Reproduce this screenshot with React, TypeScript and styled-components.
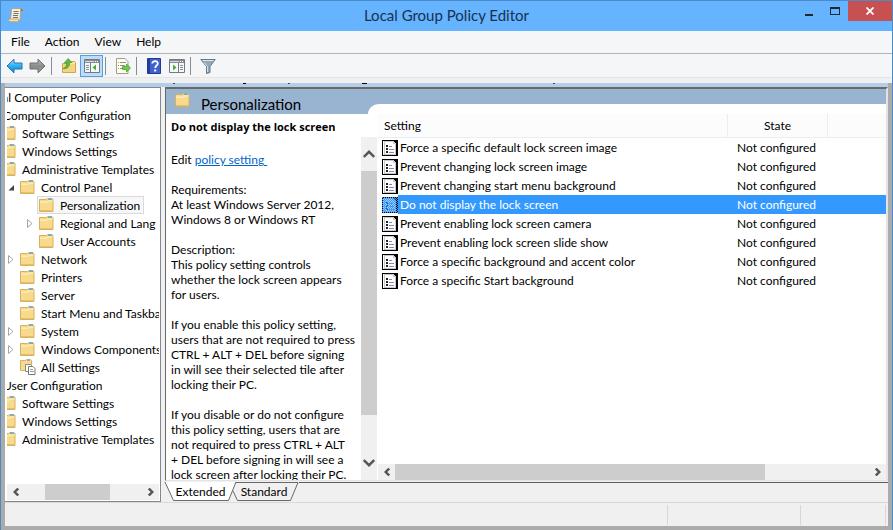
import React from 'react';
import styled, { createGlobalStyle, css } from 'styled-components';

const GlobalStyle = createGlobalStyle`
  *, *::before, *::after { box-sizing: border-box; }
  body { margin: 0; }
  body, button { font-family: Lato, "Open Sans", sans-serif; font-size: 12px; line-height: 15px; color: #000; }
  button { border: 0; padding: 0; background: none; text-align: left; }
  ul { list-style: none; margin: 0; padding: 0; }
`;

const Window = styled.div`
  display: flex; flex-direction: column; min-height: 100vh;
  border: 1px solid #4a8ac6; background: #f0f0f0; overflow: hidden;
`;

const TitleBar = styled.header`
  display: grid; grid-template-columns: 96px 1fr 96px; height: 30px; background: #66b3ff;
`;
const TitleIcon = styled.div`padding: 6px 0 0 7px;`;
const Title = styled.h1`
  margin: 0; font-size: 15px; font-weight: 400; line-height: 29px; text-align: center; color: #16324d;
`;
const WindowButtons = styled.div`display: flex; justify-content: flex-end; align-items: flex-start;`;
const WindowButton = styled.button<{ $close?: boolean }>`
  display: grid; place-items: center; height: 20px; flex: none;
  width: ${p => (p.$close ? 44 : 26)}px;
  background: ${p => (p.$close ? '#c75050' : 'transparent')};
`;

const MenuBar = styled.nav`
  display: flex; gap: 15px; height: 23px; padding-left: 10px;
  background: #f5f6f7; border-bottom: 1px solid #b2b4b5;
`;
const MenuItem = styled.button`line-height: 22px;`;

const ToolBar = styled.div`
  display: flex; height: 24px; padding: 1px 0 0 2px; background: #f5f6f7; border-bottom: 1px solid #e5e5e5;
`;
const ToolButton = styled.button<{ $active?: boolean }>`
  display: grid; place-items: center; width: 23px; height: 22px; border: 1px solid transparent;
  ${p => p.$active && css`background: #bcdcfa; border-color: #569de5;`}
`;
const Separator = styled.div`width: 1px; height: 18px; margin: 2px 5px 0 2px; background: #8a8c8e;`;
const ToolGap = styled.div`height: 5px; background: #f0f0f0;`;

const Frame = styled.div`
  flex: 1; display: flex; flex-direction: column; padding: 0 4px 4px; background: #ababab;
`;
const Strip = styled.div`
  height: 4px; background: #b4cee9;
  svg { display: block; }
`;
const Panes = styled.main`flex: 1; display: flex; min-height: 0; background: #f0f0f0;`;

const TreePane = styled.section`
  flex: none; width: 156px; display: flex; flex-direction: column; padding: 0 1px 1px 2px;
  border: solid #828790; border-width: 1px 1px 1px 0; background: #fff;
`;
const TreeClip = styled.div`flex: 1; overflow: hidden;`;
const Tree = styled.ul`margin-left: -58px; width: 320px;`;
const TreeRow = styled.li<{ $level: number }>`
  display: flex; align-items: center; height: 18px; padding-left: ${p => p.$level * 19}px;
`;
const Twisty = styled.span`flex: none; width: 12px; height: 18px; display: grid; align-items: center; padding-left: 2px;`;
const TreeLabel = styled.button<{ $selected?: boolean }>`
  display: flex; align-items: center; gap: 5px; height: 18px; padding: 0 3px 0 1px; white-space: nowrap;
  border: 1px solid transparent;
  ${p => p.$selected && css`background: #f7f7f7; border-color: #dadada;`}
`;

const Splitter = styled.div`flex: none; width: 4px; background: #f0f0f0;`;

const DetailPane = styled.section`flex: 1; min-width: 0; display: flex; flex-direction: column;`;
const DetailBox = styled.div`
  flex: 1; min-height: 0; display: flex; flex-direction: column; background: #fff;
  border: solid; border-width: 2px 2px 1px 1px; border-color: #696969 #e3e3e3 #e3e3e3 #696969;
`;
const Banner = styled.div`display: flex; align-items: flex-end; height: 25px; background: #99b4d1;`;
const BannerTitle = styled.h2`
  display: flex; align-items: center; gap: 10px; flex: none; width: 202px; height: 25px; margin: 0; padding: 5px 0 0 9px;
  font-size: 15px; line-height: 20px; font-weight: 400;
  svg { margin-bottom: 8px; }
`;
const BannerCurve = styled.div`flex: 1; height: 10px; border-top-left-radius: 11px 10px; background: #fff;`;
const DetailBody = styled.div`flex: 1; min-height: 0; display: flex;`;

const Description = styled.section`
  flex: none; width: 212px; display: flex; flex-direction: column;
`;
const PolicyName = styled.h3`
  margin: 0; height: 23px; padding: 5px 0 0 5px;
  font-family: "Open Sans", sans-serif; font-size: 11px; line-height: 15px; font-weight: 700;
`;
const DescriptionBody = styled.div`flex: 1; min-height: 0; display: flex;`;
const DescriptionText = styled.div`
  flex: 1; min-width: 0; height: 343px; padding: 15px 0 0 5px; overflow: hidden; white-space: pre;
  p { margin: 0 0 15px; }
`;
const Link = styled.a`color: #0066cc; text-decoration: underline; white-space: pre;`;

const ListPane = styled.section`flex: 1; min-width: 0; display: flex; flex-direction: column;`;
const ListClip = styled.div`flex: 1; overflow: hidden;`;
const SettingsTable = styled.table`
  width: 100%; table-layout: fixed; border-collapse: separate; border-spacing: 0;
  th, td { padding: 0; white-space: nowrap; overflow: hidden; }
  th { height: 24px; font-weight: 400; background: #fcfcfc; border-bottom: 1px solid #e6eef6; }
  th + th { border-left: 1px solid #e6eef6; }
  th:first-child { text-align: left; padding-left: 6px; }
`;
const NameCol = styled.col`width: 349px;`;
const StateCol = styled.col`width: 100px;`;
const SettingRow = styled.tr<{ $selected?: boolean }>`
  td { height: 19px; line-height: 19px; color: ${p => (p.$selected ? '#fff' : '#000')}; }
  td + td { padding-left: 10px; background: ${p => (p.$selected ? '#3399ff' : 'transparent')}; }
`;
const NameCell = styled.div<{ $selected?: boolean }>`
  display: flex; align-items: center; height: 19px; padding-left: 4px;
  span { flex: 1; padding-left: 2px; background: ${p => (p.$selected ? '#3399ff' : 'transparent')}; }
`;

const VScroll = styled.div`flex: none; width: 16px; margin-right: 1px; display: flex; flex-direction: column; background: #f0f0f0;`;
const HScroll = styled.div`flex: none; height: 16px; display: flex; background: #f0f0f0;`;
const ScrollButton = styled.button<{ $tall?: boolean }>`
  flex: none; display: grid; place-items: center;
  width: ${p => (p.$tall ? 16 : 17)}px; height: ${p => (p.$tall ? 34 : 16)}px;
`;
const Gap = styled.div<{ $grow: number }>`flex: ${p => p.$grow} 0 0;`;
const Thumb = styled.div<{ $grow: number }>`flex: ${p => p.$grow} 0 0; background: #cdcdcd;`;

const Tabs = styled.div`display: flex; height: 20px; margin-top: 1px;`;
const TabRule = styled.div`flex: 1; border-top: 1px solid #5f5f5f;`;
const Tab = styled.button<{ $front?: boolean }>`
  position: relative; isolation: isolate; flex: none; height: 20px; line-height: 20px; text-align: center;
  width: ${p => (p.$front ? 69 : 65)}px; z-index: ${p => (p.$front ? 1 : 0)};
  padding: 0 ${p => (p.$front ? 0 : 5)}px 0 ${p => (p.$front ? 2 : 0)}px;
  svg { position: absolute; left: 0; top: 0; overflow: visible; z-index: -1; }
`;

const StatusBar = styled.footer`
  display: flex; height: 24px; padding: 2px 2px 1px 0; background: #f0f0f0; border-top: 1px solid #d9d9d9;
`;
const StatusCell = styled.div<{ $width?: number }>`
  ${p => (p.$width ? `flex: none; width: ${p.$width}px;` : 'flex: 1;')}
  border-right: 1px solid #d7d7d7;
`;

const Folder = () => (
  <svg width="16" height="16" viewBox="0 0 16 16" aria-hidden="true">
    <path d="M.5 2.5h7l1-1h4.5l1 1v12H.5z" fill="#f8da8c" stroke="#d7b160" />
    <path d="M1 5.2h7.2l1-1.2H13.5" fill="none" stroke="#fff3c9" />
    <path d="M9 2.200h4" stroke="#5fa8dc" strokeWidth="1.4" />
    <path d="M1 13.5h12.5" stroke="#e8bf66" />
  </svg>
);
const AllSettings = () => (
  <svg width="16" height="16" viewBox="0 0 16 16" aria-hidden="true">
    <path d="M.5 1.5h5l1-1h4l1 1v10H.5z" fill="#f8da8c" stroke="#d7b160" />
    <path d="M7 1.300h3" stroke="#5fa8dc" />
    <path d="M5.500 5.500h5l1 1v6h-6z" fill="#fff" stroke="#888" />
    <path d="M8.500 7.500h4.500l2 2v6h-6.500z" fill="#fff" stroke="#777" />
    <path d="M10 10.500h3M10 12.500h4" stroke="#999" />
  </svg>
);
const PolicyIcon = ({ selected }: { selected?: boolean }) => (
  <svg width="16" height="16" viewBox="0 0 16 16" aria-hidden="true" shapeRendering="crispEdges">
    <defs>
      <pattern id="dither" width="2" height="2" patternUnits="userSpaceOnUse">
        <path d="M0 0h1v1H0zM1 1h1v1H1z" fill="#3399ff" />
      </pattern>
    </defs>
    <path d="M0 0h16v16H0z" fill="#000" />
    <path d="M1 1h10l3 3v11H1z" fill="#fff" />
    <path d="M2.500 1.500h8l3 3v9.500H2.500z" fill="#fff" stroke="#c8c8c8" />
    <path d="M11 1v3h3z" fill="#ccc" />
    <path d="M4 5h2v2H4zM4 8h2v2H4zM4 11h2v2H4z" fill="#222" />
    <path d="M7 6.500h3M7 9.500h5M7 12.500h5" stroke="#8888a8" />
    {selected && (
      <>
        <path d="M1 1h13v14H1z" fill="#3399ff" fillOpacity=".45" />
        <path d="M0 0h16v16H0z" fill="url(#dither)" />
      </>
    )}
  </svg>
);
const Chevron = ({ d, w, h }: { d: string; w: number; h: number }) => (
  <svg width={w} height={h} viewBox={`0 0 ${w} ${h}`} aria-hidden="true">
    <path d={d} fill="none" stroke="#555" strokeWidth="2.4" />
  </svg>
);
const LeftChevron = () => <Chevron w={6} h={8} d="M5.200.500 1.700 4l3.500 3.500" />;
const RightChevron = () => <Chevron w={6} h={8} d="M.800.500 4.300 4 .800 7.500" />;
const UpChevron = () => <Chevron w={12} h={8} d="M.800 7 6 1.800 11.200 7" />;
const DownChevron = () => <Chevron w={12} h={8} d="M.800 1 6 6.200 11.200 1" />;

const Scroll = () => (
  <svg width="16" height="16" viewBox="0 0 16 16" aria-hidden="true">
    <path d="M4 1.500h10c1 0 1.500 2.500 0 2.500H12.500l-.5 9.500H2.500L3.500 3c0-.8 0-1.500.5-1.500z" fill="#f8efd4" stroke="#b59c6b" strokeWidth=".8" />
    <path d="M12.500 4V1.800H14c1 .2 1 2.200 0 2.200z" fill="#8b7445" />
    <path d="M1.500 12h9.200c-.6 1 0 2.500.8 2.800H2C.4 14.500.4 12.300 1.500 12z" fill="#f3e2b4" stroke="#b59c6b" strokeWidth=".8" />
    <path d="M5.500 4.500h5M5.500 6.500h5M5 8.500h5M5 10.500h5" stroke="#68788a" />
  </svg>
);
const Arrow = ({ back }: { back?: boolean }) => (
  <svg width="17" height="16" viewBox="0 0 17 16" aria-hidden="true">
    <defs>
      <linearGradient id={back ? 'blueArrow' : 'grayArrow'} x1="0" y1="0" x2="0" y2="1">
        <stop offset="0" stopColor={back ? '#a8e4ff' : '#c4c4c4'} />
        <stop offset=".5" stopColor={back ? '#2ab0f4' : '#8a8a8a'} />
        <stop offset="1" stopColor={back ? '#1580d0' : '#9d9d9d'} />
      </linearGradient>
    </defs>
    <path
      d={back ? 'M1 8 8 1.200V5h8v6H8v3.800z' : 'M16 8 9 1.200V5H1v6h8v3.800z'}
      fill={back ? 'url(#blueArrow)' : 'url(#grayArrow)'} stroke={back ? '#2b6fae' : '#6c6c6c'}
    />
  </svg>
);
const UpFolder = () => (
  <svg width="16" height="16" viewBox="0 0 16 16" aria-hidden="true">
    <path d="M1.500 5.500h5l1-2h6l1 1v10h-13z" fill="#f5d47d" stroke="#cfa650" />
    <path d="M8 5h6" stroke="#fff1c0" />
    <path d="M2 10.500c2.500-.5 3.700-2.500 3.500-5.500H3.200l4-4.500L10.800 4.500H8.500c.3 4-2 6.800-6.500 6z" fill="#58bd3c" stroke="#37902a" strokeWidth=".6" />
  </svg>
);
const Pane = ({ left }: { left?: boolean }) => (
  <svg width="16" height="14" viewBox="0 0 16 14" aria-hidden="true">
    <path d="M.5.500h15v13H.500z" fill="#f6f7f8" stroke="#74797f" />
    <path d="M1 1h14v3H1z" fill="#878d96" />
    <path d="M1 2.500h9" stroke="#d5dae2" />
    <path d="M11 2.500h1M13 2.500h1" stroke="#fff" />
    {left ? (
      <>
        <path d="M6.500 4v9.500" stroke="#74797f" />
        <path d="M2 6.500h3M2 8.500h3M2 10.500h3" stroke="#7d8fa6" />
        <path d="M12 5.500v6L8.500 8.500z" fill="#43b02a" />
      </>
    ) : (
      <>
        <path d="M9.500 4v9.500" stroke="#74797f" />
        <path d="M11 6.500h3M11 8.500h3M11 10.500h3" stroke="#7d8fa6" />
        <path d="M4 5.500v6l3.500-3z" fill="#43b02a" />
      </>
    )}
  </svg>
);
const ExportList = () => (
  <svg width="16" height="16" viewBox="0 0 16 16" aria-hidden="true">
    <path d="M1.500.500h8.500l3 3v12H1.500z" fill="#fffdf0" stroke="#a59d86" />
    <path d="M3 4.500h1M3 7.500h1M3 10.500h1" stroke="#c18b3b" />
    <path d="M5 4.500h6M5 7.500h5M5 10.500h4" stroke="#8d93a0" />
    <path d="M7.500 8.500h4V6l4 4-4 4v-2.500h-4z" fill="#6fcb48" stroke="#3c9a27" strokeWidth=".7" />
  </svg>
);
const HelpIcon = () => (
  <svg width="14" height="16" viewBox="0 0 14 16" aria-hidden="true">
    <path d="M.5.500h13v15H.500z" fill="#3d62cf" stroke="#23388e" />
    <path d="M1 1h2v14H1z" fill="#253f9d" />
    <path d="M5.300 5.500C5.300 2.300 11 2.400 10.800 5.600c-.1 2-2.600 2-2.600 4.400" fill="none" stroke="#fff" strokeWidth="1.800" />
    <path d="M7.200 11.500h2v2h-2z" fill="#fff" />
  </svg>
);
const Funnel = () => (
  <svg width="16" height="16" viewBox="0 0 16 16" aria-hidden="true">
    <path d="M.8 1.500h14.400L10 8.500v6l-3.500 1V8.500z" fill="#93a9b8" stroke="#5a7080" strokeWidth=".9" />
    <path d="M2.500 2.500h11" stroke="#dbe7ee" />
    <path d="M4 4.500 7.500 8.500V14" fill="none" stroke="#d3e0e8" />
  </svg>
);
const Triangle = ({ open }: { open?: boolean }) => (
  <svg width="8" height="9" viewBox="0 0 8 9" aria-hidden="true">
    {open ? <path d="M6 2v5.500H.500z" fill="#404040" /> : <path d="M.5.500 5 4.500.500 8.500z" fill="#fff" stroke="#a6a6a6" />}
  </svg>
);

type Node = { text: string; level: number; icon?: 'all'; twisty?: 'open' | 'closed'; selected?: boolean };
const nodes: Node[] = [
  { text: 'Local Computer Policy', level: 0 },
  { text: 'Computer Configuration', level: 1 },
  { text: 'Software Settings', level: 2 },
  { text: 'Windows Settings', level: 2 },
  { text: 'Administrative Templates', level: 2 },
  { text: 'Control Panel', level: 3, twisty: 'open' },
  { text: 'Personalization', level: 4, selected: true },
  { text: 'Regional and Lang', level: 4, twisty: 'closed' },
  { text: 'User Accounts', level: 4 },
  { text: 'Network', level: 3, twisty: 'closed' },
  { text: 'Printers', level: 3 },
  { text: 'Server', level: 3 },
  { text: 'Start Menu and Taskbar', level: 3 },
  { text: 'System', level: 3, twisty: 'closed' },
  { text: 'Windows Components', level: 3, twisty: 'closed' },
  { text: 'All Settings', level: 3, icon: 'all' },
  { text: 'User Configuration', level: 1 },
  { text: 'Software Settings', level: 2 },
  { text: 'Windows Settings', level: 2 },
  { text: 'Administrative Templates', level: 2 },
];

const settings = [
  'Force a specific default lock screen image',
  'Prevent changing lock screen image',
  'Prevent changing start menu background',
  'Do not display the lock screen',
  'Prevent enabling lock screen camera',
  'Prevent enabling lock screen slide show',
  'Force a specific background and accent color',
  'Force a specific Start background',
];
const selectedSetting = 'Do not display the lock screen';

const paragraphs = [
  'Requirements:\nAt least Windows Server 2012,\nWindows 8 or Windows RT',
  'Description:\nThis policy setting controls\nwhether the lock screen appears\nfor users.',
  'If you enable this policy setting,\nusers that are not required to press\nCTRL + ALT + DEL before signing\nin will see their selected tile after\nlocking their PC.',
  'If you disable or do not configure\nthis policy setting, users that are\nnot required to press CTRL + ALT\n+ DEL before signing in will see a\nlock screen after locking their PC.',
];

export default function App() {
  return (
    <>
      <GlobalStyle />
      <Window>
        <TitleBar>
          <TitleIcon><Scroll /></TitleIcon>
          <Title>Local Group Policy Editor</Title>
          <WindowButtons>
            <WindowButton aria-label="Minimize">
              <svg width="8" height="16" viewBox="0 0 8 16"><path d="M0 11h8v2H0z" fill="#1d2a36" /></svg>
            </WindowButton>
            <WindowButton aria-label="Maximize">
              <svg width="10" height="8" viewBox="0 0 10 8"><path d="M0 0h10v8H0zM1 2v5h8V2z" fillRule="evenodd" fill="#1d2a36" /></svg>
            </WindowButton>
            <WindowButton $close aria-label="Close">
              <svg width="8" height="8" viewBox="0 0 8 8"><path d="m.5.500 7 7M7.500.500l-7 7" stroke="#fff" strokeWidth="1.800" /></svg>
            </WindowButton>
          </WindowButtons>
        </TitleBar>
        <MenuBar>
          {['File', 'Action', 'View', 'Help'].map(m => <MenuItem key={m}>{m}</MenuItem>)}
        </MenuBar>
        <ToolBar role="toolbar">
          <ToolButton aria-label="Back"><Arrow back /></ToolButton>
          <ToolButton aria-label="Forward"><Arrow /></ToolButton>
          <Separator />
          <ToolButton aria-label="Up one level"><UpFolder /></ToolButton>
          <ToolButton $active aria-label="Show or hide console tree"><Pane left /></ToolButton>
          <Separator />
          <ToolButton aria-label="Export list"><ExportList /></ToolButton>
          <Separator />
          <ToolButton aria-label="Help"><HelpIcon /></ToolButton>
          <ToolButton aria-label="Show or hide action pane"><Pane /></ToolButton>
          <Separator />
          <ToolButton aria-label="Filter"><Funnel /></ToolButton>
        </ToolBar>
        <ToolGap />
        <Frame>
          <Strip>
            <svg width="560" height="1" viewBox="0 0 560 1" aria-hidden="true">
              <path d="M168 0h2v1h-2zM283 0h2v1h-2zM548 0h2v1h-2z" fill="#3f4f5f" />
              <path d="M238 0h3v1h-3zM357 0h5v1h-5z" fill="#000" />
            </svg>
          </Strip>
          <Panes>
            <TreePane>
              <TreeClip>
                <Tree role="tree">
                  {nodes.map((n, i) => (
                    <TreeRow key={i} $level={n.level} role="treeitem" aria-selected={!!n.selected}>
                      <Twisty>{n.twisty && <Triangle open={n.twisty === 'open'} />}</Twisty>
                      <TreeLabel $selected={n.selected}>
                        {n.icon === 'all' ? <AllSettings /> : <Folder />}
                        {n.text}
                      </TreeLabel>
                    </TreeRow>
                  ))}
                </Tree>
              </TreeClip>
              <HScroll>
                <ScrollButton aria-label="Scroll left"><LeftChevron /></ScrollButton>
                <Gap $grow={21} /><Thumb $grow={66} /><Gap $grow={32} />
                <ScrollButton aria-label="Scroll right"><RightChevron /></ScrollButton>
              </HScroll>
            </TreePane>
            <Splitter />
            <DetailPane>
              <DetailBox>
                <Banner>
                  <BannerTitle><Folder />Personalization</BannerTitle>
                  <BannerCurve />
                </Banner>
                <DetailBody>
                  <Description>
                    <PolicyName>Do not display the lock screen</PolicyName>
                    <DescriptionBody>
                      <DescriptionText>
                        <p>Edit <Link href="#edit">policy setting </Link></p>
                        {paragraphs.map(p => <p key={p}>{p}</p>)}
                      </DescriptionText>
                      <VScroll>
                        <ScrollButton $tall aria-label="Scroll up"><UpChevron /></ScrollButton>
                        <Thumb $grow={244} /><Gap $grow={31} />
                        <ScrollButton $tall aria-label="Scroll down"><DownChevron /></ScrollButton>
                      </VScroll>
                    </DescriptionBody>
                  </Description>
                  <ListPane>
                    <ListClip>
                      <SettingsTable>
                        <colgroup><NameCol /><StateCol /><col /></colgroup>
                        <thead><tr><th scope="col">Setting</th><th scope="col">State</th><th scope="col" aria-label="Comment" /></tr></thead>
                        <tbody>
                          {settings.map(s => {
                            const selected = s === selectedSetting;
                            return (
                              <SettingRow key={s} $selected={selected}>
                                <td><NameCell $selected={selected}><PolicyIcon selected={selected} /><span>{s}</span></NameCell></td>
                                <td>Not configured</td>
                                <td />
                              </SettingRow>
                            );
                          })}
                        </tbody>
                      </SettingsTable>
                    </ListClip>
                    <HScroll>
                      <ScrollButton aria-label="Scroll left"><LeftChevron /></ScrollButton>
                      <Thumb $grow={370} /><Gap $grow={104} />
                      <ScrollButton aria-label="Scroll right"><RightChevron /></ScrollButton>
                    </HScroll>
                  </ListPane>
                </DetailBody>
              </DetailBox>
              <Tabs>
                <Tab $front>
                  <svg width="71" height="20" viewBox="0 0 71 20" aria-hidden="true">
                    <path d="M0 0 8.500 18.500h55L71 0" fill="#fff" stroke="#696969" />
                  </svg>
                  Extended
                </Tab>
                <Tab>
                  <svg width="66" height="20" viewBox="0 0 66 20" aria-hidden="true">
                    <path d="M-1 9 3.500 18.500h53L64 .500H2" fill="#f0f0f0" stroke="#696969" />
                  </svg>
                  Standard
                </Tab>
                <TabRule />
              </Tabs>
            </DetailPane>
          </Panes>
          <StatusBar>
            <StatusCell />
            <StatusCell $width={133} />
            <StatusCell $width={85} />
          </StatusBar>
        </Frame>
      </Window>
    </>
  );
}
